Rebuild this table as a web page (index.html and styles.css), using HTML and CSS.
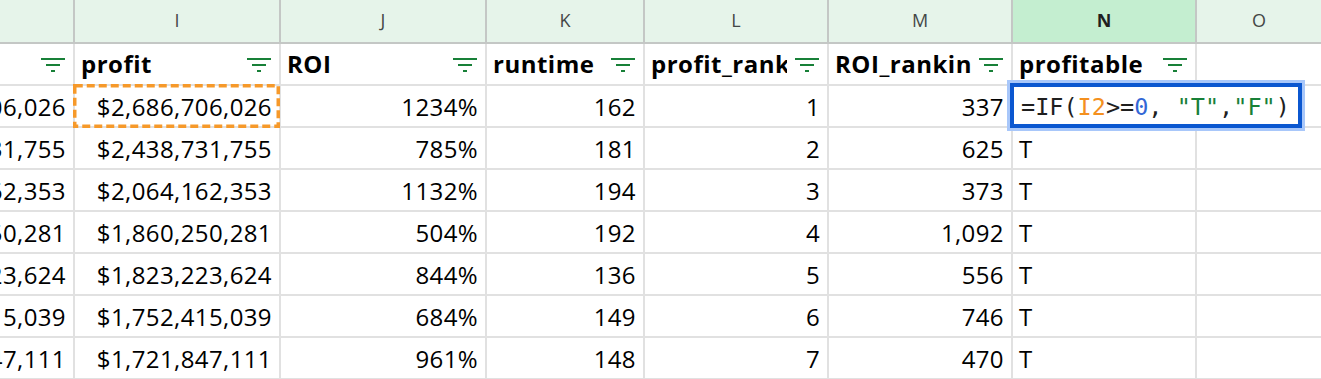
FILE: index.html
```html
<!DOCTYPE html>
<html lang="en">
<head>
<meta charset="utf-8">
<title>Sheet</title>
<link rel="stylesheet" href="styles.css">
</head>
<body>
<div class="sheet">
  <div class="row head">
    <div class="cell col">H</div>
    <div class="cell col">I</div>
    <div class="cell col">J</div>
    <div class="cell col">K</div>
    <div class="cell col">L</div>
    <div class="cell col">M</div>
    <div class="cell col sel">N</div>
    <div class="cell col last">O</div>
  </div>
  <div class="row labels">
    <div class="cell lab"><span class="name">gross</span><svg class="filt" viewBox="0 0 24 14" width="24" height="14"><path d="M0 1h24M5 7h14M10 13h4"/></svg></div>
    <div class="cell lab"><span class="name">profit</span><svg class="filt" viewBox="0 0 24 14" width="24" height="14"><path d="M0 1h24M5 7h14M10 13h4"/></svg></div>
    <div class="cell lab"><span class="name">ROI</span><svg class="filt" viewBox="0 0 24 14" width="24" height="14"><path d="M0 1h24M5 7h14M10 13h4"/></svg></div>
    <div class="cell lab"><span class="name">runtime</span><svg class="filt" viewBox="0 0 24 14" width="24" height="14"><path d="M0 1h24M5 7h14M10 13h4"/></svg></div>
    <div class="cell lab"><span class="name">profit_ranking</span><svg class="filt" viewBox="0 0 24 14" width="24" height="14"><path d="M0 1h24M5 7h14M10 13h4"/></svg></div>
    <div class="cell lab"><span class="name">ROI_ranking</span><svg class="filt" viewBox="0 0 24 14" width="24" height="14"><path d="M0 1h24M5 7h14M10 13h4"/></svg></div>
    <div class="cell lab"><span class="name">profitable</span><svg class="filt" viewBox="0 0 24 14" width="24" height="14"><path d="M0 1h24M5 7h14M10 13h4"/></svg></div>
    <div class="cell lab last"></div>
  </div>
  <div class="row">
    <div class="cell num">$2,923,706,026</div>
    <div class="cell num copied">$2,686,706,026<svg class="ants" width="207" height="44" viewBox="0 0 207 44"><rect x="1.75" y="1.75" width="203.5" height="40.5"/></svg></div>
    <div class="cell num">1234%</div>
    <div class="cell num">162</div>
    <div class="cell num">1</div>
    <div class="cell num">337</div>
    <div class="cell txt editing"><div class="editor"><span class="k">=IF(</span><span class="ref">I2</span><span class="k">&gt;=</span><span class="n">0</span><span class="k">, </span><span class="s">"T"</span><span class="k">,</span><span class="s">"F"</span><span class="k">)</span></div></div>
    <div class="cell last"></div>
  </div>
  <div class="row">
    <div class="cell num">$2,794,731,755</div>
    <div class="cell num">$2,438,731,755</div>
    <div class="cell num">785%</div>
    <div class="cell num">181</div>
    <div class="cell num">2</div>
    <div class="cell num">625</div>
    <div class="cell txt">T</div>
    <div class="cell last"></div>
  </div>
  <div class="row">
    <div class="cell num">$2,264,162,353</div>
    <div class="cell num">$2,064,162,353</div>
    <div class="cell num">1132%</div>
    <div class="cell num">194</div>
    <div class="cell num">3</div>
    <div class="cell num">373</div>
    <div class="cell txt">T</div>
    <div class="cell last"></div>
  </div>
  <div class="row">
    <div class="cell num">$2,320,250,281</div>
    <div class="cell num">$1,860,250,281</div>
    <div class="cell num">504%</div>
    <div class="cell num">192</div>
    <div class="cell num">4</div>
    <div class="cell num">1,092</div>
    <div class="cell txt">T</div>
    <div class="cell last"></div>
  </div>
  <div class="row">
    <div class="cell num">$2,068,223,624</div>
    <div class="cell num">$1,823,223,624</div>
    <div class="cell num">844%</div>
    <div class="cell num">136</div>
    <div class="cell num">5</div>
    <div class="cell num">556</div>
    <div class="cell txt">T</div>
    <div class="cell last"></div>
  </div>
  <div class="row">
    <div class="cell num">$2,052,415,039</div>
    <div class="cell num">$1,752,415,039</div>
    <div class="cell num">684%</div>
    <div class="cell num">149</div>
    <div class="cell num">6</div>
    <div class="cell num">746</div>
    <div class="cell txt">T</div>
    <div class="cell last"></div>
  </div>
  <div class="row">
    <div class="cell num">$1,921,847,111</div>
    <div class="cell num">$1,721,847,111</div>
    <div class="cell num">961%</div>
    <div class="cell num">148</div>
    <div class="cell num">7</div>
    <div class="cell num">470</div>
    <div class="cell txt">T</div>
    <div class="cell last"></div>
  </div>
</div>
</body>
</html>
```
FILE: styles.css
```css
html, body {
  margin: 0;
  padding: 0;
  background: #ffffff;
  overflow: hidden;
}

body {
  font-family: "Open Sans", "Lato", sans-serif;
  color: #000000;
}

.sheet {
  width: calc(100% + 131px);
  margin-left: -131px;
}

.row {
  display: grid;
  grid-template-columns: 206px 206px 206px 158px 184px 184px 184px 1fr;
}

.cell {
  box-sizing: border-box;
  height: 42px;
  border-right: 2px solid #e1e1e1;
  border-bottom: 2px solid #e1e1e1;
  overflow: hidden;
  white-space: nowrap;
  font-size: 24px;
  line-height: 39px;
  padding-top: 1px;
}

.cell.last {
  border-right: none;
}

/* column letters */
.head .cell {
  height: 44px;
  background: #e6f4ea;
  border-right-color: #c4c7c5;
  border-bottom-color: #c4c7c5;
  font-size: 18px;
  line-height: 40px;
  padding-top: 0;
  text-align: center;
  color: #444746;
}

.head .cell.sel {
  background: #c4eed0;
  color: #1f1f1f;
  font-weight: 700;
}

/* header labels with filter buttons */
.lab {
  display: flex;
  align-items: center;
  padding: 0 8px 0 6px;
  font-weight: 700;
  line-height: 40px;
  letter-spacing: 0.5px;
}

.lab .name {
  flex: 1 1 auto;
  min-width: 0;
  overflow: hidden;
}

.filt {
  flex: none;
  margin-left: 8px;
  margin-top: 2px;
}

.filt path {
  fill: none;
  stroke: #188038;
  stroke-width: 2;
}

/* data cells */
.num {
  display: flex;
  justify-content: flex-end;
  padding-right: 7px;
  letter-spacing: 0.4px;
}

.txt {
  padding-left: 6px;
}

/* copied range marching ants */
.copied {
  position: relative;
  overflow: visible;
}

.ants {
  position: absolute;
  left: -2px;
  top: -2px;
  z-index: 2;
}

.ants rect {
  fill: none;
  stroke: #f6992a;
  stroke-width: 3.5;
  stroke-dasharray: 8 4;
}

/* in-cell formula editor */
.editing {
  position: relative;
  overflow: visible;
}

.editor {
  position: absolute;
  left: -3px;
  top: -3px;
  z-index: 3;
  box-sizing: border-box;
  width: 292px;
  height: 45px;
  border: 4px solid #0b57d0;
  box-shadow: 0 0 0 3px #a8c7fa;
  background: #ffffff;
  padding: 4px 0 0 7px;
  font-family: "DejaVu Sans Mono", "Liberation Mono", monospace;
  font-size: 23.5px;
  line-height: 33px;
  white-space: pre;
  letter-spacing: 0;
  color: #1f1f1f;
}

.editor .ref {
  color: #f4901e;
}

.editor .n {
  color: #3367d6;
}

.editor .s {
  color: #188038;
}
```
